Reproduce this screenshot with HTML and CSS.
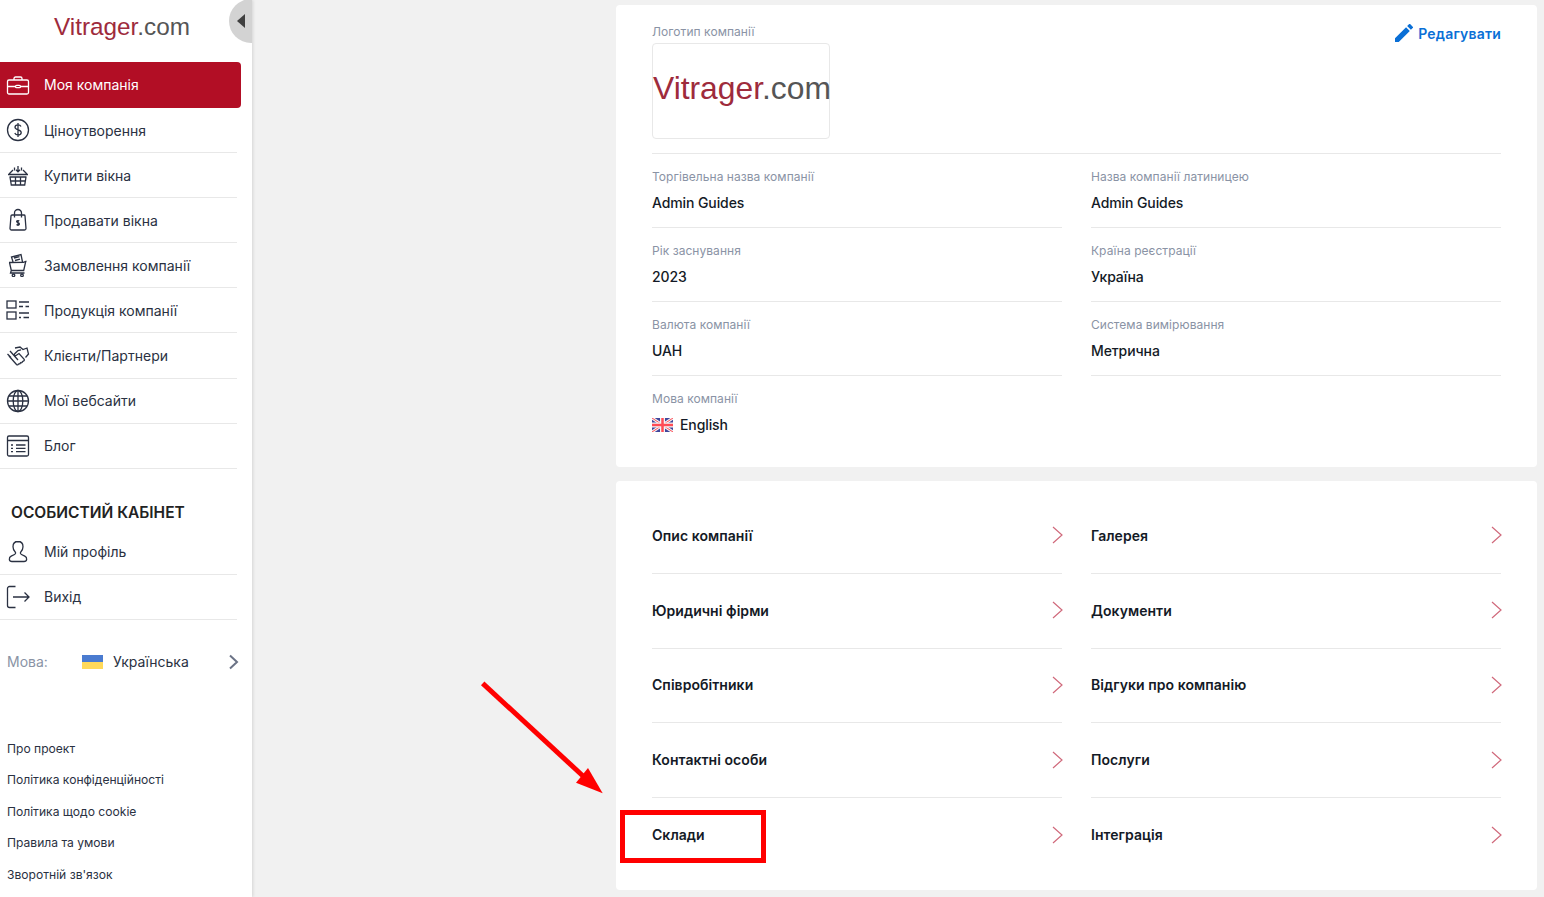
FILE: index.html
```html
<!DOCTYPE html>
<html lang="uk">
<head>
  <meta charset="UTF-8">
  <title>Моя компанія</title>
  <link rel="stylesheet" href="styles.css">
</head>
<body>

  <aside class="sidebar">
    <div class="logo"><span class="logo-red">Vitrager</span><span class="logo-grey">.com</span></div>
    <div class="toggle"><span class="toggle-arrow"></span></div>

    <nav class="menu">
      <a class="menu-item active">
        <svg class="icon" viewBox="0 0 24 24"><path d="M1.500 8.500A1.500 1.500 0 0 1 3 7h18a1.500 1.500 0 0 1 1.500 1.500v11a1.500 1.500 0 0 1-1.500 1.500H3a1.500 1.500 0 0 1-1.500-1.500zM8 7V5.500A1.500 1.500 0 0 1 9.500 4h5A1.500 1.500 0 0 1 16 5.500V7M1.500 13.500h8M14.500 13.500h8"/><rect x="9.500" y="12.300" width="5" height="2.400" rx="1.200"/></svg>
        Моя компанія
      </a>
      <a class="menu-item">
        <svg class="icon" viewBox="0 0 24 24"><circle cx="12" cy="12" r="10.500"/><path d="M15 8.500c-.5-1.100-1.600-1.700-3-1.700-1.700 0-3 .9-3 2.400 0 3.300 6.200 1.800 6.200 5.200 0 1.500-1.400 2.500-3.200 2.500-1.500 0-2.700-.7-3.200-1.900M12 5v14"/></svg>
        Ціноутворення
      </a>
      <a class="menu-item">
        <svg class="icon" viewBox="0 0 24 24"><path d="M2 11.500h20M3.500 11.500v-1L7 7M20.500 11.500v-1L17 7M3.500 14h17M4 14l1.300 8h13.400L20 14M9.500 14v8M14.500 14v8M4.800 18h14.400M12 3v5.500M10 6.800l2 2 2-2M8.500 4.500v3M15.500 4.500v3"/></svg>
        Купити вікна
      </a>
      <a class="menu-item">
        <svg class="icon" viewBox="0 0 24 24"><path d="M6 7h12a1 1 0 0 1 1 .9l1 12.600a1.500 1.500 0 0 1-1.500 1.500h-13A1.500 1.500 0 0 1 4 20.500L5 7.900A1 1 0 0 1 6 7zM8.500 9.500V5a3.500 3.500 0 0 1 7 0v4.500M13.300 13c-.8-.7-2.700-.6-2.700.6 0 1.400 2.800.8 2.800 2.300 0 1.200-2 1.300-2.900.5M12 12v6"/></svg>
        Продавати вікна
      </a>
      <a class="menu-item">
        <svg class="icon" viewBox="0 0 24 24"><path d="M3 9.500l14.500-.2L20.500 8M3.500 9.500l1.800 8h12.400l2-8.800M5.300 17.500L4.500 20h14M7 9l-1.500-5L15 1.500l1.500 7.500M8 5l5.500-1.400M9 7.500l5-1.300"/><circle cx="7.500" cy="22.300" r="1.300"/><circle cx="16" cy="22.300" r="1.300"/></svg>
        Замовлення компанії
      </a>
      <a class="menu-item">
        <svg class="icon" viewBox="0 0 24 24"><rect x="1" y="3" width="9" height="7"/><rect x="1" y="14" width="9" height="7"/><path d="M13 4h10M13 8.500h4M19.500 8.500h3.500M13 15h10M13 19.500h2M17.500 19.500h5.500"/></svg>
        Продукція компанії
      </a>
      <a class="menu-item">
        <svg class="icon" viewBox="0 0 24 24"><path d="M1.500 10l3.500 3.500M4 7l8 9M9 4l5-1 3 2.500 4-1.500 1.500 6-3 3.500M3 12l7.500 8.500c1 1 2.300 0 1.800-1M12.500 19.500c1 1 2.500-.2 1.800-1.300M14.500 18.500c1 .8 2.400-.3 1.800-1.500M16.500 17c1 .6 2.300-.5 1.700-1.700L13 9.500l-3 2c-1.200.6-2.200-.7-1.300-1.700L12 6.500l3-.7"/></svg>
        Клієнти/Партнери
      </a>
      <a class="menu-item">
        <svg class="icon" viewBox="0 0 24 24"><circle cx="12" cy="12" r="10.500"/><ellipse cx="12" cy="12" rx="4.800" ry="10.500"/><path d="M12 1.500v21M1.500 12h21M3 7h18M3 17h18"/></svg>
        Мої вебсайти
      </a>
      <a class="menu-item">
        <svg class="icon" viewBox="0 0 24 24"><rect x="1.500" y="2" width="21" height="20" rx="1.500"/><path d="M1.500 6.500h21M5 11h2M10 11h9.500M5 14.300h2M10 14.300h9.500M5 17.600h2M10 17.600h9.500"/></svg>
        Блог
      </a>
    </nav>

    <h3 class="section-title">ОСОБИСТИЙ КАБІНЕТ</h3>

    <nav class="menu">
      <a class="menu-item">
        <svg class="icon" viewBox="0 0 24 24"><path d="M12 1.500c-3.300 0-5 2.400-5 5.300 0 2.300 1 4 2.200 5.200.8.900.3 2-.7 2.500l-3.300 1.700c-2.700 1.400-2.500 5.300.8 5.300h12c3.300 0 3.500-3.900.8-5.300l-3.300-1.700c-1-.5-1.500-1.600-.7-2.500 1.200-1.200 2.200-2.900 2.200-5.200 0-2.900-1.700-5.300-5-5.300z"/></svg>
        Мій профіль
      </a>
      <a class="menu-item">
        <svg class="icon" viewBox="0 0 24 24"><path d="M9.500 1.500H3.500a2 2 0 0 0-2 2v17a2 2 0 0 0 2 2h6M7 12h16M18.500 7.500L23 12l-4.500 4.500"/></svg>
        Вихід
      </a>
    </nav>

    <div class="lang-row">
      <span class="lang-label">Мова:</span>
      <span class="flag-ua"></span>
      <span class="lang-name">Українська</span>
      <svg class="lang-arrow" viewBox="0 0 10 16"><path d="M1.500 1.500L8.500 8l-7 6.500"/></svg>
    </div>

    <ul class="footer-links">
      <li>Про проект</li>
      <li>Політика конфіденційності</li>
      <li>Політика щодо cookie</li>
      <li>Правила та умови</li>
      <li>Зворотній зв'язок</li>
    </ul>
  </aside>

  <main class="content">
    <section class="card info-card">
      <a class="edit-link">
        <svg class="edit-icon" viewBox="3 3 18 18"><path d="M3 17.250V21h3.750L17.810 9.940l-3.750-3.750L3 17.250zM20.710 7.040a1 1 0 0 0 0-1.410l-2.340-2.340a1 1 0 0 0-1.410 0l-1.830 1.830 3.750 3.750 1.830-1.830z"/></svg>
        Редагувати
      </a>
      <div class="logo-field">
        <div class="field-label">Логотип компанії</div>
        <div class="logo-box"><span class="logo-red">Vitrager</span><span class="logo-grey">.com</span></div>
      </div>
      <div class="field-grid">
        <div class="field">
          <div class="field-label">Торгівельна назва компанії</div>
          <div class="field-value">Admin Guides</div>
        </div>
        <div class="field">
          <div class="field-label">Назва компанії латиницею</div>
          <div class="field-value">Admin Guides</div>
        </div>
        <div class="field">
          <div class="field-label">Рік заснування</div>
          <div class="field-value">2023</div>
        </div>
        <div class="field">
          <div class="field-label">Країна реєстрації</div>
          <div class="field-value">Україна</div>
        </div>
        <div class="field">
          <div class="field-label">Валюта компанії</div>
          <div class="field-value">UAH</div>
        </div>
        <div class="field">
          <div class="field-label">Система вимірювання</div>
          <div class="field-value">Метрична</div>
        </div>
        <div class="field last">
          <div class="field-label">Мова компанії</div>
          <div class="field-value lang-value">
            <svg class="flag-uk" viewBox="0 0 21 14">
              <rect width="21" height="14" fill="#41479b"/>
              <path d="M0 0l21 14M21 0L0 14" stroke="#f5f5f5" stroke-width="3"/>
              <path d="M0 0l21 14M21 0L0 14" stroke="#ff4b55" stroke-width="1"/>
              <path d="M10.500 0v14M0 7h21" stroke="#f5f5f5" stroke-width="5"/>
              <path d="M10.500 0v14M0 7h21" stroke="#ff4b55" stroke-width="2.500"/>
            </svg>
            English
          </div>
        </div>
      </div>
    </section>

    <section class="card links-card">
      <a class="link-row">Опис компанії <svg class="chevron" viewBox="0 0 11 18"><path d="M1 1l9 8-9 8"/></svg></a>
      <a class="link-row">Галерея <svg class="chevron" viewBox="0 0 11 18"><path d="M1 1l9 8-9 8"/></svg></a>
      <a class="link-row">Юридичні фірми <svg class="chevron" viewBox="0 0 11 18"><path d="M1 1l9 8-9 8"/></svg></a>
      <a class="link-row">Документи <svg class="chevron" viewBox="0 0 11 18"><path d="M1 1l9 8-9 8"/></svg></a>
      <a class="link-row">Співробітники <svg class="chevron" viewBox="0 0 11 18"><path d="M1 1l9 8-9 8"/></svg></a>
      <a class="link-row">Відгуки про компанію <svg class="chevron" viewBox="0 0 11 18"><path d="M1 1l9 8-9 8"/></svg></a>
      <a class="link-row">Контактні особи <svg class="chevron" viewBox="0 0 11 18"><path d="M1 1l9 8-9 8"/></svg></a>
      <a class="link-row">Послуги <svg class="chevron" viewBox="0 0 11 18"><path d="M1 1l9 8-9 8"/></svg></a>
      <a class="link-row last">Склади <svg class="chevron" viewBox="0 0 11 18"><path d="M1 1l9 8-9 8"/></svg></a>
      <a class="link-row last">Інтеграція <svg class="chevron" viewBox="0 0 11 18"><path d="M1 1l9 8-9 8"/></svg></a>
    </section>
  </main>

  <!-- annotation drawn over the screenshot -->
  <svg class="note-arrow" viewBox="0 0 130 120">
    <path d="M1.700 2.300L102 95" stroke="#ff0000" stroke-width="5" fill="none"/>
    <path d="M121.700 112.300L107 87 95 101.700z" fill="#ff0000"/>
  </svg>
  <div class="note-box"></div>

</body>
</html>
```

FILE: styles.css
```css
* {
  box-sizing: border-box;
}
html, body {
  height: 100%;
}
body {
  margin: 0;
  display: flex;
  height: 897px;
  overflow: hidden;
  background: #f1f1f1;
  font-family: Inter, "Noto Sans", sans-serif;
  color: #1d2433;
}
a {
  color: inherit;
  text-decoration: none;
}

/* sidebar */
.sidebar {
  position: relative;
  flex: 0 0 252px;
  background: #fff;
  box-shadow: 1px 0 3px rgba(0, 0, 0, 0.12);
}
.logo {
  height: 62px;
  padding: 11px 0 0 54px;
  font-family: "Liberation Sans", Arial, sans-serif;
  font-size: 24.300px;
  line-height: 32px;
}
.logo-red {
  color: #9e2b3c;
}
.logo-grey {
  color: #555;
}
.toggle {
  position: absolute;
  top: -1px;
  left: 229px;
  width: 23px;
  height: 44px;
  background: #d3d3d3;
  border-radius: 22px 0 0 22px;
  display: flex;
  align-items: center;
  padding-left: 8px;
}
.toggle-arrow {
  width: 0;
  height: 0;
  border-top: 7px solid transparent;
  border-bottom: 7px solid transparent;
  border-right: 8px solid #3f3f3f;
}
.menu {
  display: flex;
  flex-direction: column;
}
.menu-item {
  width: 237px;
  height: 45.100px;
  display: flex;
  align-items: center;
  gap: 14px;
  padding-left: 6px;
  font-size: 14px;
  color: #2a3142;
  border-bottom: 1px solid #e8e8e8;
}
.menu-item.active {
  width: 241px;
  height: 46px;
  padding-bottom: 1px;
  background: #b20e25;
  color: #fff;
  border-bottom: none;
  border-radius: 0 4px 4px 0;
}
.icon {
  flex: 0 0 24px;
  width: 24px;
  height: 24px;
  fill: none;
  stroke: #2a3142;
  stroke-width: 1.300;
}
.active .icon {
  stroke: #fff;
}
.section-title {
  margin: 26px 0 0;
  height: 35px;
  padding-left: 11px;
  font-size: 15.500px;
  font-weight: 600;
  line-height: 35px;
  color: #222;
}
.lang-row {
  margin-top: 20px;
  height: 44px;
  display: flex;
  align-items: center;
  padding-left: 7px;
  font-size: 14px;
}
.lang-label {
  width: 75px;
  color: #8a93a5;
}
.flag-ua {
  width: 21px;
  height: 14px;
  margin-right: 10px;
  background: linear-gradient(#4a7bd0 50%, #ffd95a 50%);
}
.lang-name {
  width: 115px;
  color: #2a3142;
}
.lang-arrow {
  width: 11px;
  height: 16px;
  fill: none;
  stroke: #6b7386;
  stroke-width: 2;
}
.footer-links {
  list-style: none;
  margin: 49px 0 0;
  padding: 0 0 0 7px;
  font-size: 12.100px;
  color: #2a3142;
}
.footer-links li {
  height: 31.400px;
  line-height: 31.400px;
}

/* main column */
.content {
  flex: 1;
  padding: 5px 7px 0 364px;
}
.card {
  background: #fff;
  border-radius: 4px;
  padding-left: 36px;
  padding-right: 36px;
}
.info-card {
  position: relative;
  height: 462px;
  padding-top: 19px;
}
.edit-link {
  position: absolute;
  top: 19px;
  right: 36px;
  display: flex;
  align-items: center;
  gap: 5px;
  font-size: 14px;
  font-weight: 600;
  letter-spacing: 0.2px;
  color: #0a6fd6;
}
.edit-icon {
  width: 18px;
  height: 18px;
  fill: #0a6fd6;
}
.field-label {
  font-size: 12px;
  line-height: 16px;
  letter-spacing: 0.05px;
  color: #8a93a5;
}
.logo-field {
  height: 130px;
  border-bottom: 1px solid #e8e8e8;
  width: 410px;
}
.logo-box {
  width: 178px;
  height: 96px;
  margin-top: 3px;
  border: 1px solid #e8e8e8;
  border-radius: 4px;
  font-family: "Liberation Sans", Arial, sans-serif;
  font-size: 31.800px;
  line-height: 88px;
  white-space: nowrap;
}
.field-grid {
  display: grid;
  grid-template-columns: 410px 410px;
  column-gap: 29px;
}
.field {
  height: 74px;
  padding-top: 15px;
  border-bottom: 1px solid #e8e8e8;
}
.info-card .logo-field {
  width: 849px;
}
.field.last {
  border-bottom: none;
}
.field-value {
  margin-top: 7.500px;
  font-size: 14px;
  font-weight: 500;
  letter-spacing: -0.1px;
  line-height: 20px;
  color: #141a26;
}
.lang-value {
  display: flex;
  align-items: center;
  gap: 7px;
}
.flag-uk {
  width: 21px;
  height: 14px;
}
.links-card {
  margin-top: 14px;
  height: 409px;
  padding-top: 18px;
  display: grid;
  grid-template-columns: 410px 410px;
  grid-auto-rows: 74.750px;
  column-gap: 29px;
}
.link-row {
  display: flex;
  align-items: center;
  justify-content: space-between;
  padding-bottom: 1px;
  font-size: 14px;
  font-weight: 600;
  letter-spacing: 0.05px;
  color: #141a26;
  border-bottom: 1px solid #e8e8e8;
}
.link-row.last {
  border-bottom: none;
}
.chevron {
  width: 11px;
  height: 18px;
  margin-right: -1px;
  fill: none;
  stroke: #d0697b;
  stroke-width: 1.200;
}

/* red annotation */
.note-arrow {
  position: absolute;
  left: 481px;
  top: 681px;
  width: 130px;
  height: 120px;
}
.note-box {
  position: absolute;
  left: 620px;
  top: 810px;
  width: 146px;
  height: 53px;
  border: 5px solid #ff0000;
}
```
